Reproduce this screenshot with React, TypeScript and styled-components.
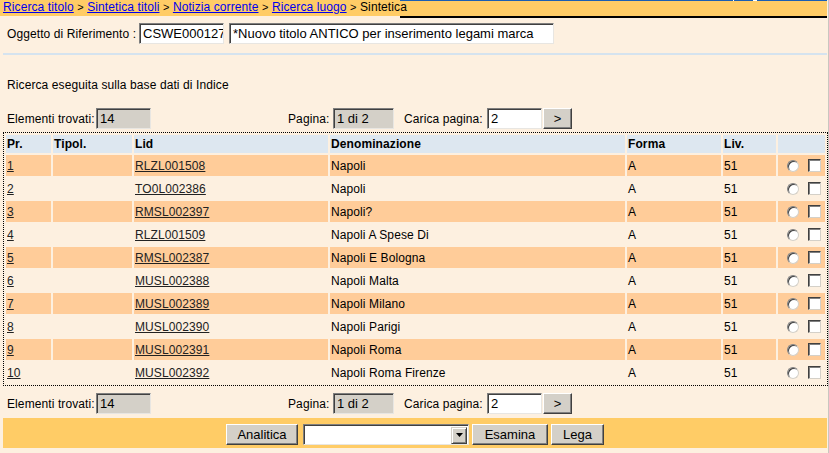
import React from "react";
import styled, { createGlobalStyle } from "styled-components";

const Global = createGlobalStyle`
  html, body { margin: 0; padding: 0; background: #fdf0e0; }
  body { font-family: "Liberation Sans", Arial, sans-serif; font-size: 12px; color: #000; letter-spacing: 0.1px; }
  * { box-sizing: border-box; }
`;

const Page = styled.div`
  width: 829px;
  height: 453px;
  background: #fdf0e0;
  border-right: 1px solid #c9c6c0;
  overflow: hidden;
`;

const TopBar = styled.div`
  display: grid;
  grid-template-columns: 400px 427px;
  align-items: start;
  width: 828px;
`;

const Crumbs = styled.div`
  width: 400px;
  height: 16px;
  background: #ffcc66;
  padding-left: 3px;
  font-size: 12px;
  line-height: 15px;
  white-space: nowrap;
  overflow: visible;
  position: relative;
  z-index: 1;
`;

const CrumbRest = styled.div`
  height: 18px;
  background:
    linear-gradient(to right, #1a5fb4 0 333px, #ffffff 333px 334px, #1a5fb4 334px 353px, #ffffff 353px 357px, #1a5fb4 357px) top / 100% 1px no-repeat,
    #ffcc66;
  border-bottom: 2px solid #000;
`;

const CrumbLink = styled.a`
  color: #0000ee;
  text-decoration: underline;
`;

const CrumbSep = styled.span`
  color: #000;
  font-size: 11px;
`;

const Content = styled.div`
  padding: 0 1px 0 3px;
`;

const RefRow = styled.div`
  display: flex;
  align-items: center;
  margin-top: 5px;
  height: 21px;
`;

const Label = styled.span<{ $w?: number; $pl?: number }>`
  flex: 0 0 ${(p) => (p.$w ? `${p.$w}px` : "auto")};
  padding-left: ${(p) => p.$pl ?? 0}px;
  font-size: 12px;
  white-space: nowrap;
`;

const TextBox = styled.div<{ $w: number; $ro?: boolean; $ml?: number }>`
  flex: 0 0 ${(p) => p.$w}px;
  height: 21px;
  margin-left: ${(p) => p.$ml ?? 0}px;
  background: ${(p) => (p.$ro ? "#d4d0c8" : "#ffffff")};
  border: 1px solid;
  border-color: #7f7f7f #e8e6e2 #e8e6e2 #7f7f7f;
  box-shadow: inset 1px 1px 0 #404040;
  font-size: 13px;
  letter-spacing: 0;
  line-height: 18px;
  padding: 1px 0 0 3px;
  white-space: nowrap;
  overflow: hidden;
  color: #000;
`;

const Separator = styled.div`
  margin-top: 9px;
  height: 2px;
  background: #d5e3ef;
`;

const Info = styled.div`
  margin-top: 23px;
  padding-left: 4px;
  line-height: 14px;
  font-size: 12px;
`;

const Paging = styled.div<{ $mt: number }>`
  display: flex;
  align-items: center;
  margin-top: ${(p) => p.$mt}px;
  height: 21px;
  padding-left: 4px;
`;

const Spacer = styled.div<{ $w: number }>`
  flex: 0 0 ${(p) => p.$w}px;
`;

const Button = styled.button<{ $w: number; $ml?: number }>`
  flex: 0 0 ${(p) => p.$w}px;
  width: ${(p) => p.$w}px;
  height: 21px;
  margin: 0 0 0 ${(p) => p.$ml ?? 0}px;
  padding: 0;
  background: #d4d0c8;
  border: 1px solid;
  border-color: #ffffff #404040 #404040 #ffffff;
  box-shadow: inset -1px -1px 0 #808080;
  font-family: "Liberation Sans", Arial, sans-serif;
  font-size: 13px;
  color: #000;
  line-height: 18px;
`;

const Grid = styled.table`
  margin-top: 3px;
  width: 825px;
  border: 1px dotted #000;
  border-collapse: separate;
  border-spacing: 2px;
  table-layout: fixed;
`;

const HeadCell = styled.th`
  height: 18px;
  padding: 0 1px;
  background: #dde7f0;
  text-align: left;
  font-weight: bold;
  font-size: 12px;
  line-height: 14px;
`;

const Row = styled.tr<{ $alt: boolean }>`
  background: ${(p) => (p.$alt ? "#ffcc99" : "#fdf0e0")};
`;

const Cell = styled.td`
  height: 21px;
  padding: 0 1px;
  font-size: 12px;
  line-height: 14px;
  white-space: nowrap;
`;

const RowLink = styled.a`
  color: #222;
  text-decoration: underline;
`;

const Controls = styled.div`
  display: flex;
  align-items: center;
  padding-left: 8px;
  gap: 9px;
`;

const Radio = styled.span`
  display: block;
  width: 12px;
  height: 12px;
  border-radius: 50%;
  background: #fff;
  border: 1px solid;
  border-color: #808080 #d4d0c8 #d4d0c8 #808080;
  box-shadow: inset 1px 1px 0 #404040;
`;

const Check = styled.span`
  display: block;
  width: 13px;
  height: 13px;
  background: #fff;
  border: 1px solid;
  border-color: #404040 #d4d0c8 #d4d0c8 #404040;
  box-shadow: inset 1px 1px 0 #808080;
`;

const Footer = styled.div`
  margin-top: 4px;
  height: 30px;
  background: #ffcc66;
  display: flex;
  justify-content: center;
  align-items: flex-start;
  padding-top: 6px;
`;

const Select = styled.div`
  flex: 0 0 166px;
  height: 21px;
  margin-left: 5px;
  display: flex;
  justify-content: flex-end;
  align-items: center;
  background: #fff;
  border: 1px solid;
  border-color: #7f7f7f #e8e6e2 #e8e6e2 #7f7f7f;
  box-shadow: inset 1px 1px 0 #404040;
  padding: 2px 1px 1px 2px;
`;

const SelectArrow = styled.span`
  width: 16px;
  height: 17px;
  background: #d4d0c8;
  border: 1px solid;
  border-color: #d4d0c8 #404040 #404040 #d4d0c8;
  box-shadow: inset 1px 1px 0 #fff, inset -1px -1px 0 #808080;
  display: flex;
  align-items: center;
  justify-content: center;
`;

const rows = [
  ["1", "RLZL001508", "Napoli"],
  ["2", "TO0L002386", "Napoli"],
  ["3", "RMSL002397", "Napoli?"],
  ["4", "RLZL001509", "Napoli A Spese Di"],
  ["5", "RMSL002387", "Napoli E Bologna"],
  ["6", "MUSL002388", "Napoli Malta"],
  ["7", "MUSL002389", "Napoli Milano"],
  ["8", "MUSL002390", "Napoli Parigi"],
  ["9", "MUSL002391", "Napoli Roma"],
  ["10", "MUSL002392", "Napoli Roma Firenze"],
];

const cols = [45, 79, 194, 295, 94, 53, 47];

function PagingRow({ mt }: { mt: number }) {
  return (
    <Paging $mt={mt}>
      <Label $w={89}>Elementi trovati:</Label>
      <TextBox $w={55} $ro>14</TextBox>
      <Spacer $w={137} />
      <Label $w={45}>Pagina:</Label>
      <TextBox $w={61} $ro>1 di 2</TextBox>
      <Spacer $w={10} />
      <Label $w={83}>Carica pagina:</Label>
      <TextBox $w={55}>2</TextBox>
      <Button $w={29} $ml={1}>&gt;</Button>
    </Paging>
  );
}

export default function App() {
  return (
    <Page>
      <Global />
      <TopBar>
        <Crumbs>
          <CrumbLink>Ricerca titolo</CrumbLink> <CrumbSep>&gt;</CrumbSep>{" "}
          <CrumbLink>Sintetica titoli</CrumbLink> <CrumbSep>&gt;</CrumbSep>{" "}
          <CrumbLink>Notizia corrente</CrumbLink> <CrumbSep>&gt;</CrumbSep>{" "}
          <CrumbLink>Ricerca luogo</CrumbLink> <CrumbSep>&gt;</CrumbSep> Sintetica
        </Crumbs>
        <CrumbRest />
      </TopBar>
      <Content>
        <RefRow>
          <Label $w={136} $pl={4}>Oggetto di Riferimento :</Label>
          <TextBox $w={85}>CSWE000127</TextBox>
          <TextBox $w={325} $ml={5}>*Nuovo titolo ANTICO per inserimento legami marca</TextBox>
        </RefRow>
        <Separator />
        <Info>Ricerca eseguita sulla base dati di Indice</Info>
        <PagingRow mt={16} />
        <Grid>
          <colgroup>
            {cols.map((w, i) => (
              <col key={i} style={{ width: w }} />
            ))}
          </colgroup>
          <thead>
            <tr>
              <HeadCell>Pr.</HeadCell>
              <HeadCell>Tipol.</HeadCell>
              <HeadCell>Lid</HeadCell>
              <HeadCell>Denominazione</HeadCell>
              <HeadCell>Forma</HeadCell>
              <HeadCell>Liv.</HeadCell>
              <HeadCell />
            </tr>
          </thead>
          <tbody>
            {rows.map(([n, lid, name], i) => (
              <Row key={n} $alt={i % 2 === 0}>
                <Cell>
                  <RowLink>{n}</RowLink>
                </Cell>
                <Cell />
                <Cell>
                  <RowLink>{lid}</RowLink>
                </Cell>
                <Cell>{name}</Cell>
                <Cell>A</Cell>
                <Cell>51</Cell>
                <Cell>
                  <Controls>
                    <Radio />
                    <Check />
                  </Controls>
                </Cell>
              </Row>
            ))}
          </tbody>
        </Grid>
        <PagingRow mt={7} />
        <Footer>
          <Button $w={72}>Analitica</Button>
          <Select>
            <SelectArrow>
              <svg width="7" height="4" viewBox="0 0 7 4">
                <path d="M0 0h7L3.5 4z" fill="#000" />
              </svg>
            </SelectArrow>
          </Select>
          <Button $w={76} $ml={3}>Esamina</Button>
          <Button $w={53} $ml={3}>Lega</Button>
        </Footer>
      </Content>
    </Page>
  );
}
